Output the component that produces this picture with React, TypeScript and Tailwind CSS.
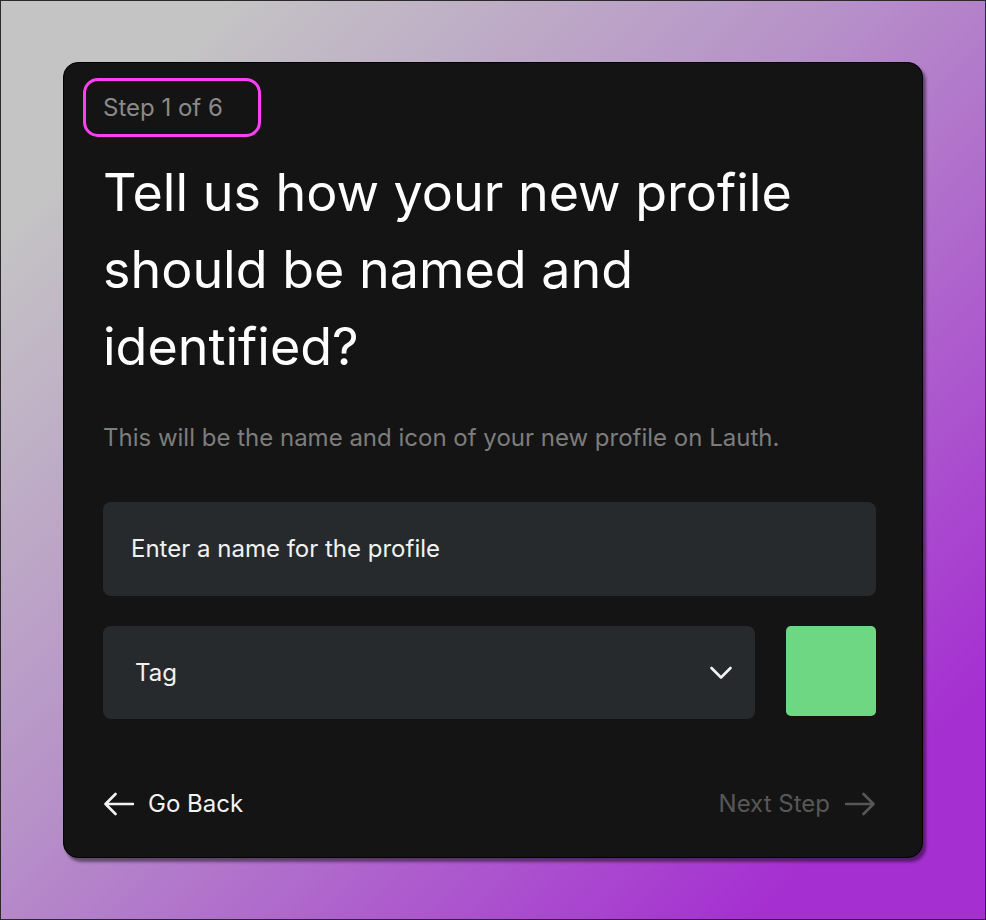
import React from "react";

const ArrowIcon = ({ dir, className }: { dir: "left" | "right"; className?: string }) => (
  <svg width="31" height="24" viewBox="0 0 31 24" fill="none" className={className}>
    {dir === "left" ? (
      <path d="M30 12H2.5M12.5 2L2.5 12l10 10" stroke="currentColor" strokeWidth="2.6" strokeLinecap="round" strokeLinejoin="round" />
    ) : (
      <path d="M1 12h27.5M18.5 2l10 10-10 10" stroke="currentColor" strokeWidth="2.6" strokeLinecap="round" strokeLinejoin="round" />
    )}
  </svg>
);

export default function App() {
  return (
    <div className="min-h-[920px] w-[986px] border border-[#2a2a2a] bg-[linear-gradient(135deg,#c4c4c4_12%,#b690c8_45%,#a52fd1_88%)] pl-[62px] pt-[61px] font-['Inter','Noto_Sans',sans-serif]">
      <div className="flex h-[796px] w-[860px] flex-col rounded-[15px] border border-black bg-[#141414] pl-[19px] pr-[19px] pt-[15px] shadow-[3px_4px_3px_rgba(0,0,0,0.45)]">
        <div className="flex">
          <div className="flex h-[59px] items-center rounded-[15px] border-[3px] border-[#ff3ff5] pl-[17px] pr-[35px] text-[24px] text-[#8a8a8a]">
            Step 1 of 6
          </div>
        </div>
        <div className="pl-[20px] pr-[27px]">
          <h1 className="mt-[17px] text-[52px] leading-[77px] font-normal text-white">
            Tell us how your new profile
            <br />
            should be named and
            <br />
            identified?
          </h1>
          <p className="mt-[39px] text-[24px] leading-[28px] text-[#7d7d7d]">
            This will be the name and icon of your new profile on Lauth.
          </p>
          <div className="mt-[50px] flex h-[94px] items-center rounded-[8px] bg-[#272a2d] pl-[28px] text-[24px] text-[#f2f2f2]">
            Enter a name for the profile
          </div>
          <div className="mt-[30px] flex items-start gap-[31px]">
            <div className="flex h-[93px] flex-1 items-center justify-between rounded-[8px] bg-[#272a2d] pl-[32px] pr-[22px] text-[24px] text-[#f2f2f2]">
              <span>Tag</span>
              <svg width="24" height="14" viewBox="0 0 24 14" fill="none">
                <path d="M2.5 2l9.5 9.5L21.5 2" stroke="#f2f2f2" strokeWidth="2.6" strokeLinecap="round" strokeLinejoin="round" />
              </svg>
            </div>
            <div className="h-[90px] w-[90px] rounded-[5px] bg-[#6dd784]" />
          </div>
          <div className="mt-[67px] flex items-center justify-between text-[24px]">
            <div className="flex items-center gap-[14px] text-[#f2f2f2]">
              <ArrowIcon dir="left" />
              <span>Go Back</span>
            </div>
            <div className="flex items-center gap-[15px] text-[#575757]">
              <span>Next Step</span>
              <ArrowIcon dir="right" />
            </div>
          </div>
        </div>
      </div>
    </div>
  );
}
